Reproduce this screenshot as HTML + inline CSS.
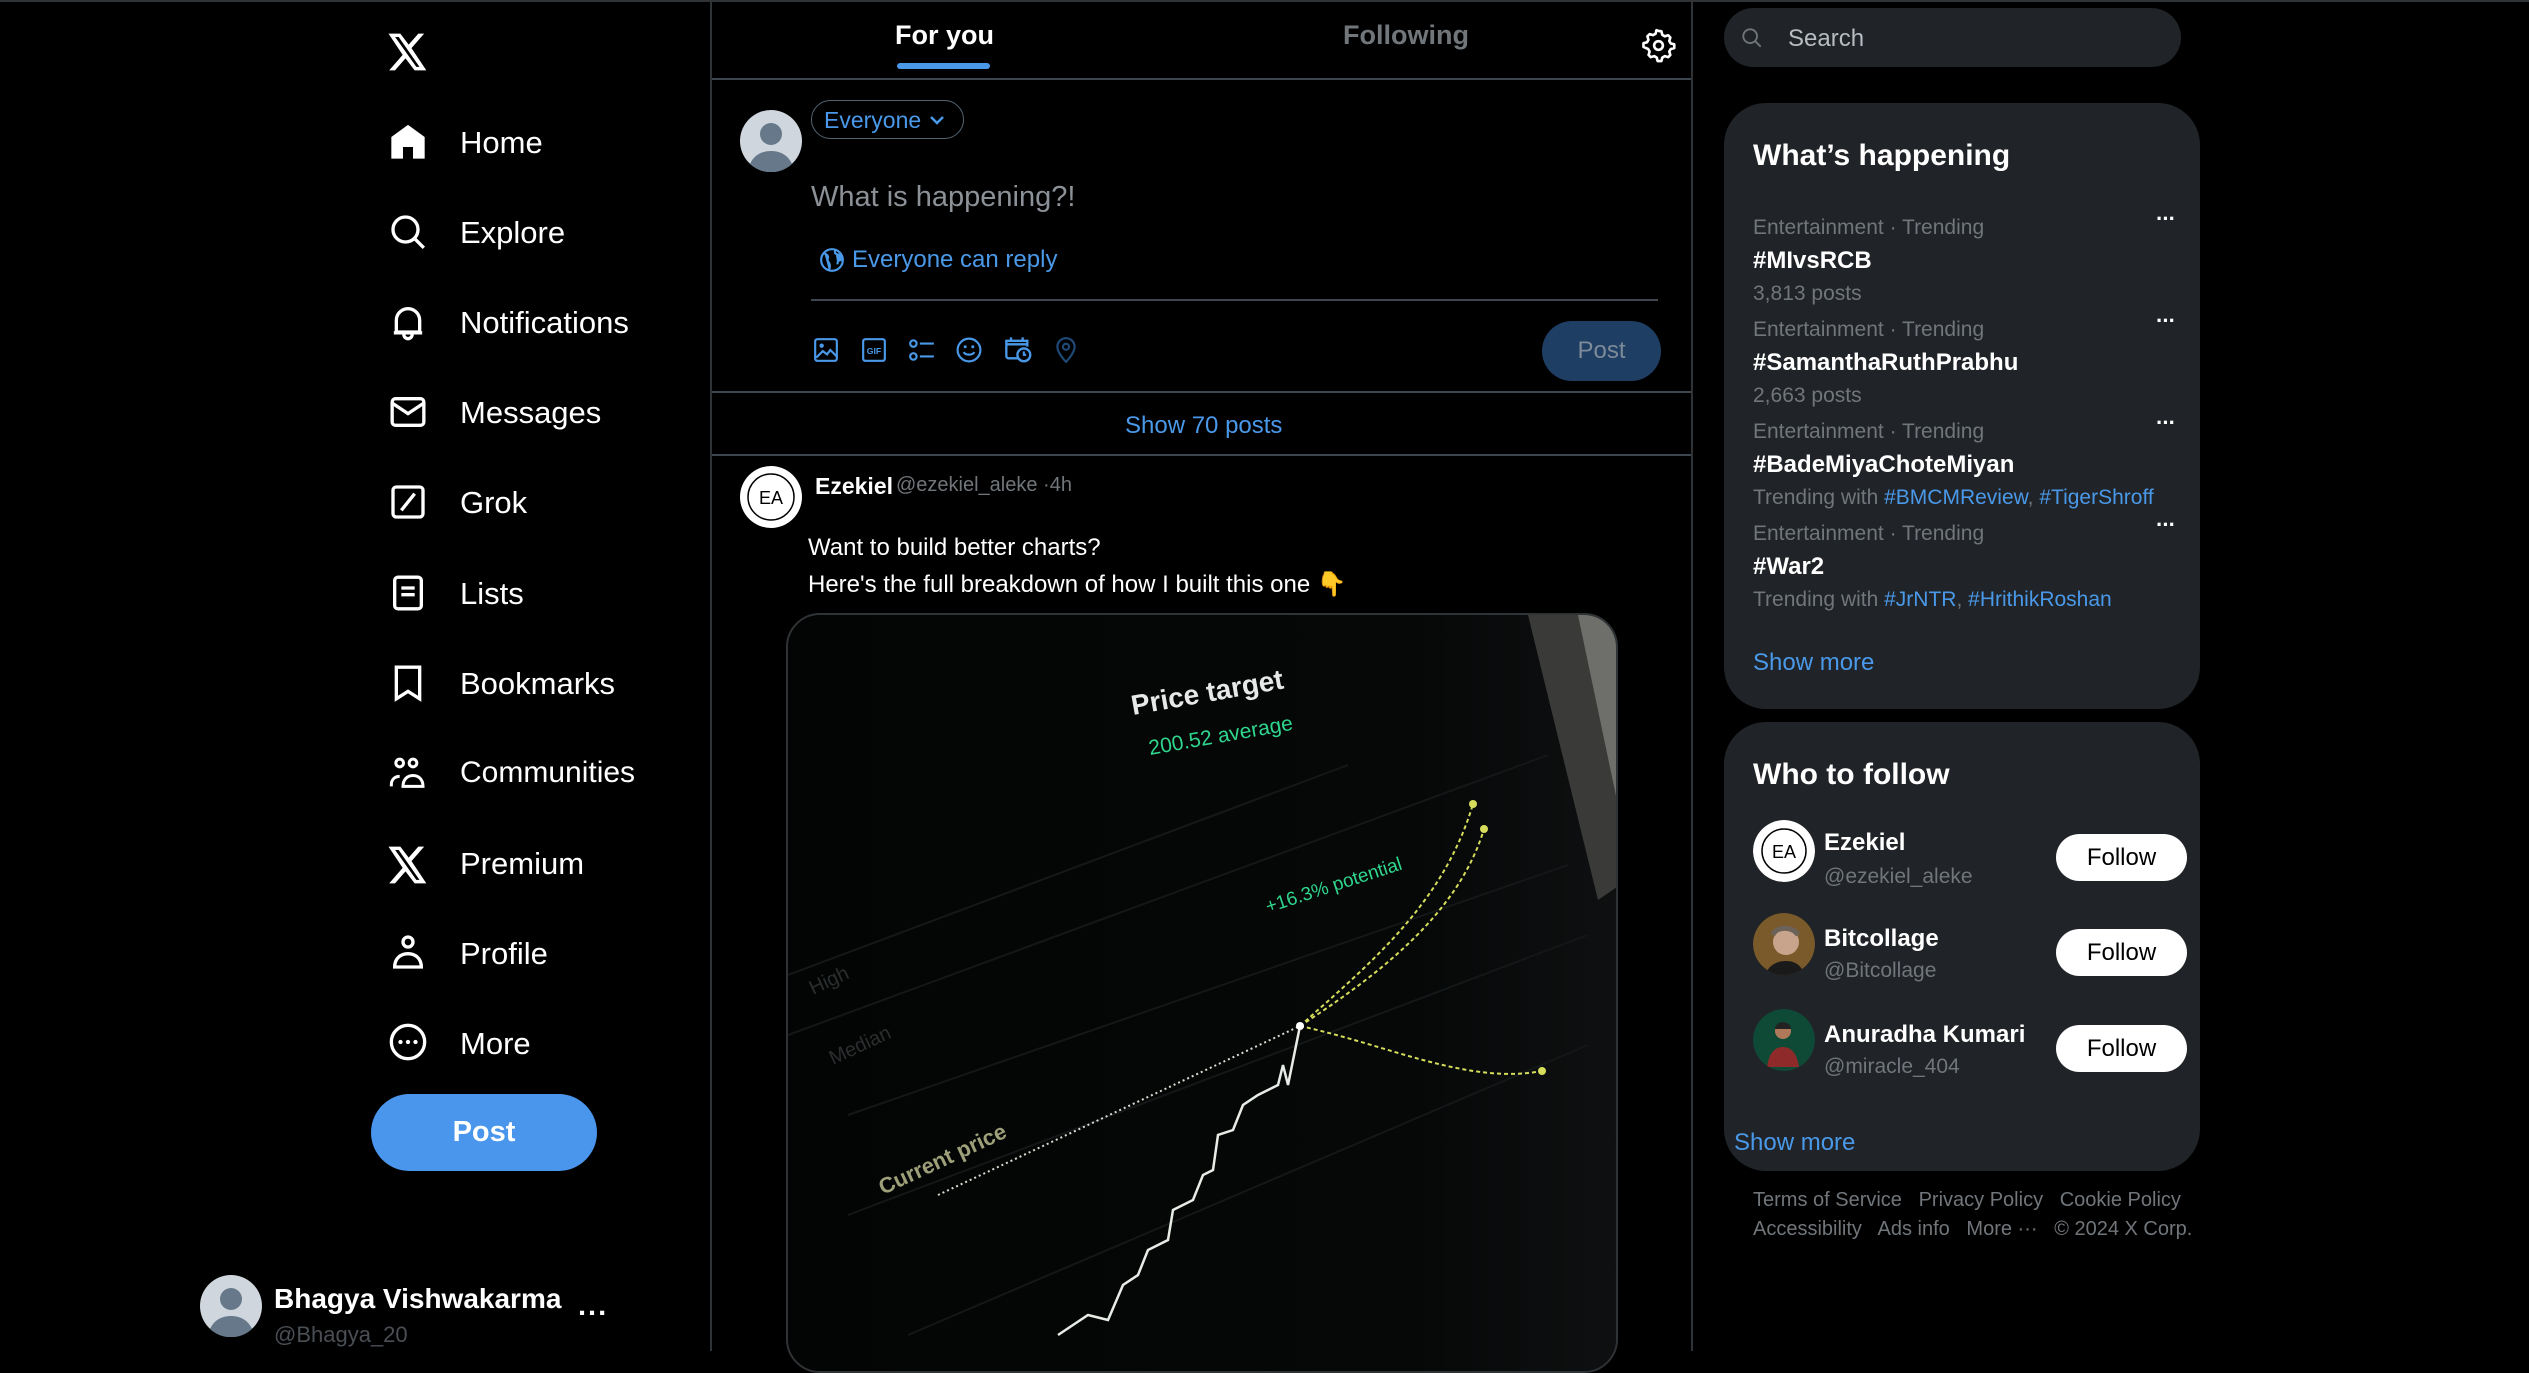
<!DOCTYPE html>
<html><head><meta charset="utf-8"><style>
*{margin:0;padding:0;box-sizing:border-box}
body{width:2529px;height:1351px;background:#000;overflow:hidden;position:relative;font-family:"Liberation Sans",sans-serif;color:#e7e9ea}
.a{position:absolute;white-space:nowrap}
.nav{font-size:31px;color:#fff;left:460px}
.ic{position:absolute;left:388px;width:40px;height:40px}
.g{color:#71767b}
.b{color:#4a99e9}
.card{position:absolute;background:#202327;border-radius:42px}
.cat{font-size:21px;color:#71767b;left:1753px}
.tag{font-size:24px;font-weight:bold;color:#fff;left:1753px}
.dots{left:2156px;font-size:22px;color:#fff;font-weight:bold;letter-spacing:-1px}
.fb{position:absolute;left:2056px;width:131px;height:47px;background:#fff;border-radius:24px;color:#000;font-size:24px;text-align:center;line-height:47px}
.fn{font-size:24px;font-weight:bold;color:#fff;left:1824px}
.fh{font-size:21px;color:#71767b;left:1824px}
.av{position:absolute;width:62px;height:62px;border-radius:50%}
</style></head><body>
<div style="position:absolute;left:0;top:0;width:2529px;height:2px;background:#2f3336"></div>
<div style="position:absolute;left:710px;top:0;width:2px;height:1351px;background:#2f3336"></div>
<div style="position:absolute;left:1691px;top:0;width:2px;height:1351px;background:#2f3336"></div>

<!-- left nav -->
<svg class="a" style="left:388px;top:33px" width="40" height="38" viewBox="0 0 24 22"><path fill="#fff" d="M18.2 0h3.5l-7.6 8.7L23 22h-7l-5.5-7.2L4.2 22H.7l8.1-9.3L.3 0h7.1l5 6.6zm-1.2 19.9h1.9L6.4 2H4.3z"/></svg>
<svg class="ic" style="top:122px" viewBox="0 0 24 24"><path fill="#fff" d="M12 1.7L2 9v13h7v-7h6v7h7V9z"/></svg>
<div class="a nav" style="top:125px">Home</div>
<svg class="ic" style="top:212px" viewBox="0 0 24 24"><circle cx="10.5" cy="10.5" r="7.5" fill="none" stroke="#fff" stroke-width="2"/><path d="M16 16l5.5 5.5" stroke="#fff" stroke-width="2"/></svg>
<div class="a nav" style="top:215px">Explore</div>
<svg class="ic" style="top:302px" viewBox="0 0 24 24"><path d="M5 18V11a7 7 0 0114 0v7zM3.5 18.5h17M9.5 19.5a2.5 2.5 0 005 0" fill="none" stroke="#fff" stroke-width="2"/></svg>
<div class="a nav" style="top:305px">Notifications</div>
<svg class="ic" style="top:392px" viewBox="0 0 24 24"><rect x="2.5" y="4" width="19" height="16" rx="2" fill="none" stroke="#fff" stroke-width="2"/><path d="M3 7l9 6 9-6" fill="none" stroke="#fff" stroke-width="2"/></svg>
<div class="a nav" style="top:395px">Messages</div>
<svg class="ic" style="top:482px" viewBox="0 0 24 24"><rect x="3" y="3" width="18" height="18" rx="2" fill="none" stroke="#fff" stroke-width="2"/><path d="M8 17L16 7" stroke="#fff" stroke-width="2"/></svg>
<div class="a nav" style="top:485px">Grok</div>
<svg class="ic" style="top:573px" viewBox="0 0 24 24"><rect x="4" y="2.5" width="16" height="19" rx="2" fill="none" stroke="#fff" stroke-width="2"/><path d="M8 9h8M8 13h8" stroke="#fff" stroke-width="2"/></svg>
<div class="a nav" style="top:576px">Lists</div>
<svg class="ic" style="top:663px" viewBox="0 0 24 24"><path d="M5 2.5h14v19l-7-4.5-7 4.5z" fill="none" stroke="#fff" stroke-width="2"/></svg>
<div class="a nav" style="top:666px">Bookmarks</div>
<svg class="ic" style="top:753px" viewBox="0 0 24 24"><circle cx="7" cy="6" r="2.3" fill="none" stroke="#fff" stroke-width="1.8"/><circle cx="15" cy="6" r="2.3" fill="none" stroke="#fff" stroke-width="1.8"/><path d="M2 20v-1c0-3 2-5 5-5M9 20c0-4 2.5-6.5 6-6.5s6 2.5 6 6.5z" fill="none" stroke="#fff" stroke-width="1.8"/></svg>
<div class="a nav" style="top:756px;font-size:30px">Communities</div>
<svg class="ic" style="top:845px" viewBox="0 0 24 22"><path fill="#fff" d="M18.2 0h3.5l-7.6 8.7L23 22h-7l-5.5-7.2L4.2 22H.7l8.1-9.3L.3 0h7.1l5 6.6zm-1.2 19.9h1.9L6.4 2H4.3z"/></svg>
<div class="a nav" style="top:846px">Premium</div>
<svg class="ic" style="top:932px" viewBox="0 0 24 24"><circle cx="12" cy="6" r="3" fill="none" stroke="#fff" stroke-width="2"/><path d="M4 21c0-5 3.5-8 8-8s8 3 8 8z" fill="none" stroke="#fff" stroke-width="2"/></svg>
<div class="a nav" style="top:936px">Profile</div>
<svg class="ic" style="top:1022px" viewBox="0 0 24 24"><circle cx="12" cy="12" r="10" fill="none" stroke="#fff" stroke-width="2"/><circle cx="7.5" cy="12" r="1.3" fill="#fff"/><circle cx="12" cy="12" r="1.3" fill="#fff"/><circle cx="16.5" cy="12" r="1.3" fill="#fff"/></svg>
<div class="a nav" style="top:1026px">More</div>
<div class="a" style="left:371px;top:1094px;width:226px;height:77px;background:#4a96ec;border-radius:39px;color:#fff;font-size:29px;font-weight:bold;text-align:center;line-height:77px">Post</div>
<svg class="a" style="left:200px;top:1275px" width="62" height="62" viewBox="0 0 62 62"><circle cx="31" cy="31" r="31" fill="#cfd6de"/><circle cx="31" cy="24" r="11" fill="#66788a"/><path d="M10 54c4-9 12-13 21-13s17 4 21 13a31 31 0 01-42 0z" fill="#66788a"/></svg>
<div class="a" style="left:274px;top:1283px;font-size:28px;font-weight:bold;color:#fff">Bhagya Vishwakarma</div>
<div class="a" style="left:578px;top:1290px;font-size:29px;font-weight:bold;color:#fff;letter-spacing:2px">...</div>
<div class="a g" style="left:274px;top:1322px;font-size:22px;color:#4a4f55">@Bhagya_20</div>

<!-- middle -->
<div class="a" style="left:895px;top:20px;font-size:27px;font-weight:bold;color:#fff">For you</div>
<div class="a" style="left:897px;top:63px;width:93px;height:6px;border-radius:3px;background:#4a99e9"></div>
<div class="a" style="left:1343px;top:20px;font-size:27px;font-weight:bold;color:#71767b">Following</div>
<svg class="a" style="left:1641px;top:28px" width="35" height="35" viewBox="0 0 24 24"><path d="M12 2l2 .3.6 2.4 1.7 1 2.4-.7 1.4 1.5-.7 2.4 1 1.7 2.4.6v2.6l-2.4.6-1 1.7.7 2.4-1.4 1.5-2.4-.7-1.7 1-.6 2.4h-2.6l-.6-2.4-1.7-1-2.4.7-1.5-1.5.7-2.4-1-1.7L1.7 13v-2.6l2.4-.6 1-1.7-.7-2.4 1.5-1.5 2.4.7 1.7-1 .6-2.4z" fill="none" stroke="#fff" stroke-width="1.8" stroke-linejoin="round"/><circle cx="12" cy="12" r="3" fill="none" stroke="#fff" stroke-width="1.8"/></svg>
<div class="a" style="left:712px;top:78px;width:979px;height:2px;background:#3e4650"></div>

<svg class="a" style="left:740px;top:110px" width="62" height="62" viewBox="0 0 62 62"><circle cx="31" cy="31" r="31" fill="#cfd6de"/><circle cx="31" cy="24" r="11" fill="#66788a"/><path d="M10 54c4-9 12-13 21-13s17 4 21 13a31 31 0 01-42 0z" fill="#66788a"/></svg>
<div class="a" style="left:811px;top:100px;width:153px;height:39px;border:1.5px solid #536471;border-radius:20px"></div>
<div class="a b" style="left:824px;top:107px;font-size:23px">Everyone</div>
<svg class="a" style="left:928px;top:111px" width="18" height="18" viewBox="0 0 18 18"><path d="M3 6l6 6 6-6" fill="none" stroke="#4a99e9" stroke-width="2.5"/></svg>
<div class="a" style="left:811px;top:181px;font-size:29px;color:#8b9197">What is happening?!</div>
<svg class="a" style="left:819px;top:247px" width="26" height="26" viewBox="0 0 24 24"><circle cx="12" cy="12" r="10" fill="none" stroke="#4a99e9" stroke-width="2"/><path d="M5 6c3 1 4 3 3 5s2 3 2 6-1 4-1 4M15 3c-1 3 1 4 3 4s3 2 2 5c-2 0-3 2-3 4" fill="#4a99e9" stroke="#4a99e9" stroke-width="2"/></svg>
<div class="a b" style="left:852px;top:246px;font-size:24px">Everyone can reply</div>
<div class="a" style="left:811px;top:299px;width:847px;height:2px;background:#3e4650"></div>
<svg class="a" style="left:813px;top:337px" width="26" height="26" viewBox="0 0 24 24"><rect x="2" y="2" width="20" height="20" rx="2" fill="none" stroke="#4a99e9" stroke-width="2"/><circle cx="8" cy="8" r="2" fill="#4a99e9"/><path d="M3 19l6-6 4 3 3-4 6 6" fill="none" stroke="#4a99e9" stroke-width="2"/></svg>
<svg class="a" style="left:861px;top:337px" width="26" height="26" viewBox="0 0 24 24"><rect x="2" y="2" width="20" height="20" rx="2" fill="none" stroke="#4a99e9" stroke-width="2"/><text x="12" y="15.5" font-size="8" font-weight="bold" fill="#4a99e9" text-anchor="middle" font-family="Liberation Sans">GIF</text></svg>
<svg class="a" style="left:908px;top:337px" width="28" height="26" viewBox="0 0 26 24"><circle cx="5" cy="6" r="3" fill="none" stroke="#4a99e9" stroke-width="2"/><circle cx="5" cy="18" r="3" fill="none" stroke="#4a99e9" stroke-width="2"/><path d="M11 6h13M11 18h13" stroke="#4a99e9" stroke-width="2"/></svg>
<svg class="a" style="left:956px;top:337px" width="26" height="26" viewBox="0 0 24 24"><circle cx="12" cy="12" r="10.5" fill="none" stroke="#4a99e9" stroke-width="2"/><circle cx="8.5" cy="9" r="1.4" fill="#4a99e9"/><circle cx="15.5" cy="9" r="1.4" fill="#4a99e9"/><path d="M7 14c2 3 8 3 10 0" fill="none" stroke="#4a99e9" stroke-width="2"/></svg>
<svg class="a" style="left:1004px;top:335px" width="28" height="28" viewBox="0 0 24 24"><path d="M12 20H4a2 2 0 01-2-2V5h18v5M2 8h18M6 2v4M16 2v4" fill="none" stroke="#4a99e9" stroke-width="2"/><circle cx="17" cy="17" r="5.5" fill="none" stroke="#4a99e9" stroke-width="2"/><path d="M17 14v3h2" fill="none" stroke="#4a99e9" stroke-width="1.8"/></svg>
<svg class="a" style="left:1053px;top:336px" width="26" height="28" viewBox="0 0 24 26"><path d="M12 24s-8-8-8-14a8 8 0 0116 0c0 6-8 14-8 14z" fill="none" stroke="#1f4a78" stroke-width="2"/><circle cx="12" cy="10" r="2.8" fill="none" stroke="#1f4a78" stroke-width="2"/></svg>
<div class="a" style="left:1542px;top:321px;width:119px;height:60px;border-radius:30px;background:#1e3e64;color:#7d8a98;font-size:24px;text-align:center;line-height:60px">Post</div>
<div class="a" style="left:712px;top:391px;width:979px;height:2px;background:#3e4650"></div>
<div class="a b" style="left:1125px;top:412px;font-size:24px">Show 70 posts</div>
<div class="a" style="left:712px;top:454px;width:979px;height:2px;background:#3e4650"></div>

<svg class="a" style="left:740px;top:466px" width="62" height="62" viewBox="0 0 62 62"><circle cx="31" cy="31" r="31" fill="#fff"/><circle cx="31" cy="31" r="23" fill="none" stroke="#000" stroke-width="1.5"/><text x="31" y="38" font-size="18" font-family="Liberation Sans" text-anchor="middle" fill="#000">EA</text></svg>
<div class="a" style="left:815px;top:473px;font-size:23px;font-weight:bold;color:#fff">Ezekiel</div>
<div class="a g" style="left:896px;top:474px;font-size:20px">@ezekiel_aleke ·4h</div>
<div class="a" style="left:808px;top:534px;font-size:24px;color:#fff">Want to build better charts?</div>
<div class="a" style="left:808px;top:570px;font-size:24px;color:#fff">Here's the full breakdown of how I built this one 👇</div>

<div class="a" style="left:786px;top:613px;width:832px;height:760px;border:2px solid #2f3336;border-radius:34px;overflow:hidden;background:#040505">
<svg width="832" height="760" viewBox="0 0 832 760" style="display:block">
<defs><linearGradient id="gr" x1="0" y1="0" x2="1" y2="0"><stop offset="0" stop-color="#030404"/><stop offset="0.75" stop-color="#060808"/><stop offset="1" stop-color="#0e1011"/></linearGradient></defs>
<rect width="832" height="760" fill="url(#gr)"/>
<path d="M740 0L832 0L832 270L810 285Z" fill="#3a3b39"/>
<path d="M790 0L832 0L832 200Z" fill="#6e6e6a"/>
<path d="M0 360L560 150M0 420L760 140M60 500L780 250M60 600L800 320M120 720L800 430" stroke="#141718" stroke-width="2"/>
<path d="M150 580L512 411" stroke="#d8ddd0" stroke-width="2" stroke-dasharray="2 3"/>
<path d="M512 411C580 350 655 290 685 189M512 411C590 360 670 300 696 214M512 411C600 430 680 470 754 456" fill="none" stroke="#d6dd5a" stroke-width="2" stroke-dasharray="4 3"/>
<circle cx="685" cy="189" r="4" fill="#d6dd5a"/><circle cx="696" cy="214" r="4" fill="#d6dd5a"/><circle cx="754" cy="456" r="4" fill="#d6dd5a"/>
<path d="M270 720L300 700L320 705L335 670L350 660L360 635L380 625L385 595L405 585L415 560L425 555L430 520L445 515L455 490L470 480L490 470L495 450L500 470L512 411" fill="none" stroke="#e8ece6" stroke-width="2.5"/>
<circle cx="512" cy="411" r="4" fill="#fff"/>
<text x="345" y="100" transform="rotate(-10 345 100)" font-size="28" font-weight="bold" fill="#e8e8e8" font-family="Liberation Sans">Price target</text>
<text x="362" y="140" transform="rotate(-10 362 140)" font-size="21" fill="#2fd68d" font-family="Liberation Sans">200.52 average</text>
<text x="480" y="298" transform="rotate(-18 480 298)" font-size="19" fill="#2fd68d" font-family="Liberation Sans">+16.3% potential</text>
<text x="95" y="580" transform="rotate(-25 95 580)" font-size="22" font-weight="bold" fill="#9ea07a" font-family="Liberation Sans">Current price</text>
<text x="25" y="380" transform="rotate(-25 25 380)" font-size="20" fill="#2b2e2f" font-family="Liberation Sans">High</text>
<text x="45" y="450" transform="rotate(-25 45 450)" font-size="20" fill="#2b2e2f" font-family="Liberation Sans">Median</text>
</svg></div>

<!-- right -->
<div class="a" style="left:1724px;top:8px;width:457px;height:59px;background:#202327;border-radius:30px"></div>
<svg class="a" style="left:1741px;top:27px" width="22" height="22" viewBox="0 0 24 24"><circle cx="10" cy="10" r="7.5" fill="none" stroke="#71767b" stroke-width="2"/><path d="M15.5 15.5l6 6" stroke="#71767b" stroke-width="2"/></svg>
<div class="a" style="left:1788px;top:25px;font-size:24px;color:#b7bcc1">Search</div>

<div class="card" style="left:1724px;top:103px;width:476px;height:606px"></div>
<div class="a" style="left:1753px;top:139px;font-size:30px;font-weight:bold;color:#fff">What’s happening</div>
<div class="a cat" style="top:216px">Entertainment · Trending</div>
<div class="a tag" style="top:247px">#MIvsRCB</div>
<div class="a cat" style="top:282px">3,813 posts</div>
<div class="a dots" style="top:206px">···</div>
<div class="a cat" style="top:318px">Entertainment · Trending</div>
<div class="a tag" style="top:349px">#SamanthaRuthPrabhu</div>
<div class="a cat" style="top:384px">2,663 posts</div>
<div class="a dots" style="top:308px">···</div>
<div class="a cat" style="top:420px">Entertainment · Trending</div>
<div class="a tag" style="top:451px">#BadeMiyaChoteMiyan</div>
<div class="a cat" style="top:486px">Trending with <span class="b">#BMCMReview</span>, <span class="b">#TigerShroff</span></div>
<div class="a dots" style="top:410px">···</div>
<div class="a cat" style="top:522px">Entertainment · Trending</div>
<div class="a tag" style="top:553px">#War2</div>
<div class="a cat" style="top:588px">Trending with <span class="b">#JrNTR</span>, <span class="b">#HrithikRoshan</span></div>
<div class="a dots" style="top:512px">···</div>
<div class="a b" style="left:1753px;top:649px;font-size:24px">Show more</div>

<div class="card" style="left:1724px;top:722px;width:476px;height:449px"></div>
<div class="a" style="left:1753px;top:758px;font-size:30px;font-weight:bold;color:#fff">Who to follow</div>
<svg class="av" style="left:1753px;top:820px" viewBox="0 0 62 62"><circle cx="31" cy="31" r="31" fill="#fff"/><circle cx="31" cy="31" r="22" fill="none" stroke="#000" stroke-width="1.5"/><text x="31" y="38" font-size="18" font-family="Liberation Sans" text-anchor="middle" fill="#000">EA</text></svg>
<div class="a fn" style="top:829px">Ezekiel</div>
<div class="a fh" style="top:865px">@ezekiel_aleke</div>
<div class="fb" style="top:834px">Follow</div>
<svg class="av" style="left:1753px;top:913px" viewBox="0 0 62 62"><circle cx="31" cy="31" r="31" fill="#7a5a2a"/><circle cx="33" cy="29" r="13" fill="#c9a48d"/><path d="M12 62c4-10 12-14 21-14s15 4 19 14z" fill="#1a1a1a"/><path d="M20 22c3-9 20-9 25 0" fill="none" stroke="#6b6259" stroke-width="5"/></svg>
<div class="a fn" style="top:925px">Bitcollage</div>
<div class="a fh" style="top:959px">@Bitcollage</div>
<div class="fb" style="top:929px">Follow</div>
<svg class="av" style="left:1753px;top:1009px" viewBox="0 0 62 62"><circle cx="31" cy="31" r="31" fill="#0e4a35"/><circle cx="30" cy="22" r="8" fill="#b07a5a"/><path d="M22 20c0-9 16-9 16 0" fill="#222"/><path d="M14 58c2-14 8-20 16-20s14 6 16 20z" fill="#8e2a2a"/></svg>
<div class="a fn" style="top:1021px">Anuradha Kumari</div>
<div class="a fh" style="top:1055px">@miracle_404</div>
<div class="fb" style="top:1025px">Follow</div>
<div class="a b" style="left:1734px;top:1129px;font-size:24px">Show more</div>

<div class="a g" style="left:1753px;top:1189px;font-size:20px">Terms of Service &nbsp; Privacy Policy &nbsp; Cookie Policy</div>
<div class="a g" style="left:1753px;top:1218px;font-size:20px">Accessibility &nbsp; Ads info &nbsp; More ··· &nbsp; © 2024 X Corp.</div>
</body></html>
